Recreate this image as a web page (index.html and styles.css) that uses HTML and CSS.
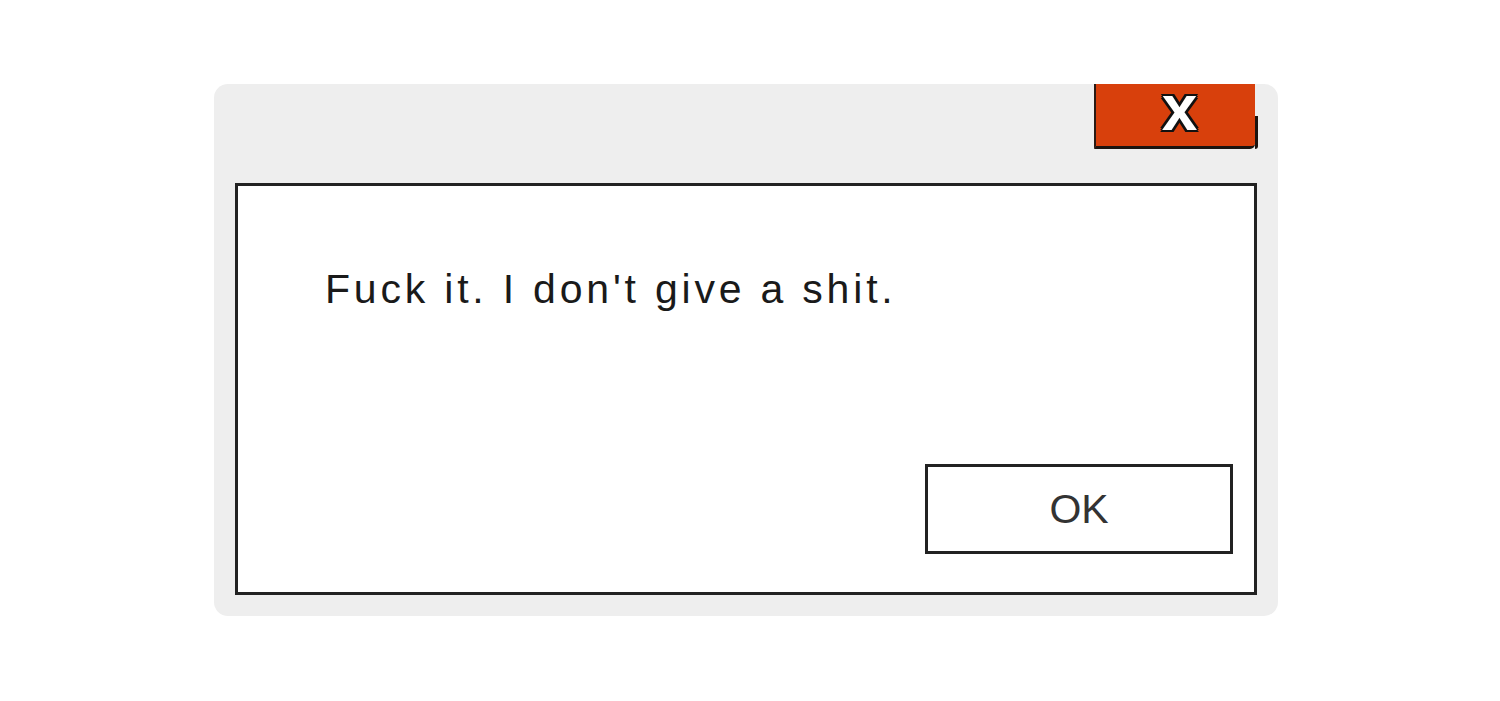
FILE: index.html
```html
<!DOCTYPE html>
<html>

<head>
    <title>Message</title>
    <meta charset="utf-8">
    <link rel="stylesheet" href="styles.css">
</head>

<body>
    <div class="dlg">
        <div class="dlg-head">
            <a class="dlg-close"><span>x</span></a>
        </div>
        <div class="dlg-body">
            <p class="dlg-msg">Fuck it. I don't give a shit.</p>
            <div class="dlg-actions">
                <a class="dlg-ok">OK</a>
            </div>
        </div>
    </div>
</body>

</html>
```

FILE: styles.css
```css
body {
    margin: 0;
    background: #fff;
    font-family: "Liberation Sans", Arial, sans-serif;
}

.dlg {
    width: 1064px;
    height: 532px;
    margin: 84px 0 0 214px;
    padding: 0 21px 21px;
    box-sizing: border-box;
    background-color: #eeeeee;
    border-radius: 14px;
    display: flex;
    flex-direction: column;
}

.dlg-head {
    height: 99px;
    display: flex;
    justify-content: flex-end;
    align-items: flex-start;
    padding-right: 2px;
}

.dlg-close {
    position: relative;
    width: 161px;
    height: 65px;
    box-sizing: border-box;
    background-color: #d8400c;
    border-left: 2px solid #2a1a14;
    border-bottom: 3px solid #1c1410;
    border-bottom-right-radius: 5px;
    display: flex;
    justify-content: center;
    align-items: center;
    padding-left: 8px;
}

.dlg-close::after {
    content: "";
    position: absolute;
    right: -3px;
    top: 32px;
    bottom: -3px;
    width: 3px;
    background-color: #1c1410;
    border-bottom-right-radius: 5px;
}

.dlg-close span {
    color: #fff;
    font-weight: bold;
    font-size: 64px;
    line-height: 1;
    margin-top: -14px;
    text-shadow: 2px 0 0 #111, -2px 0 0 #111, 0 2px 0 #111, 0 -2px 0 #111,
        2px 2px 0 #111, -2px -2px 0 #111, 2px -2px 0 #111, -2px 2px 0 #111;
}

.dlg-body {
    flex: 1;
    background-color: #fff;
    border: 3px solid #222;
    display: flex;
    flex-direction: column;
    padding: 0 21px 38px 87px;
}

.dlg-msg {
    margin: 80px 0 0;
    font-size: 41px;
    letter-spacing: 3.8px;
    color: #1a1a1a;
}

.dlg-actions {
    margin-top: auto;
    display: flex;
    justify-content: flex-end;
}

.dlg-ok {
    width: 308px;
    height: 90px;
    box-sizing: border-box;
    border: 3px solid #222;
    display: flex;
    justify-content: center;
    align-items: center;
    font-size: 41px;
    color: #333;
}
```
